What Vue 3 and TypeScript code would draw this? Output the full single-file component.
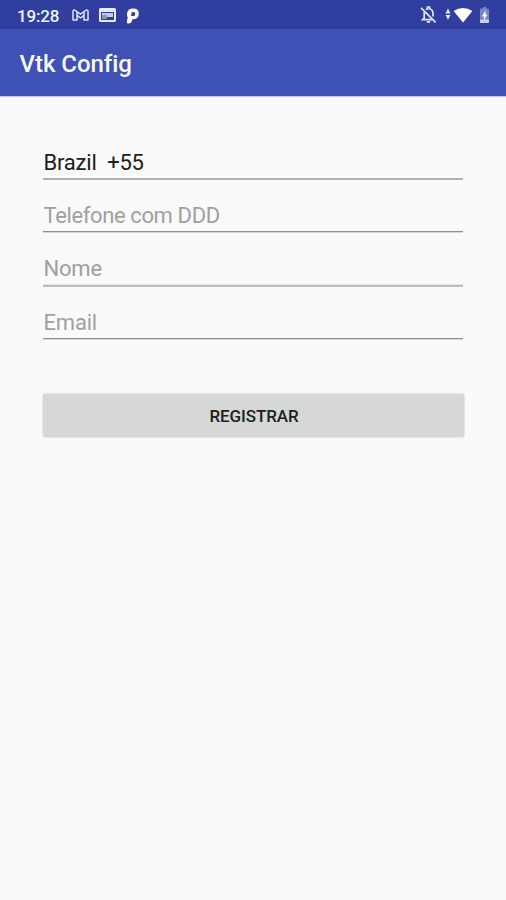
<script setup lang="ts">
import { ref } from 'vue'

interface Field {
  id: string
  placeholder: string
  value: string
}

const fields = ref<Field[]>([
  { id: 'country', placeholder: '', value: 'Brazil  +55' },
  { id: 'phone', placeholder: 'Telefone com DDD', value: '' },
  { id: 'name', placeholder: 'Nome', value: '' },
  { id: 'email', placeholder: 'Email', value: '' },
])
</script>

<template>
  <div class="screen">
    <header class="status">
      <span class="clock">19:28</span>
      <svg class="mail" width="17" height="12" viewBox="0 0 17 12" fill="none" stroke="#dfe4f8" stroke-width="1.5" stroke-linejoin="round">
        <path d="M1 11V2.2Q1 .9 2.6 1L8.5 5.2 14.4 1Q16 .9 16 2.2V11H12V6.4L8.5 9 5 6.4V11Z" />
        <path d="M5 2.6V6.4M12 2.6V6.4" />
      </svg>
      <svg class="panel" width="17" height="14" viewBox="0 0 17 14">
        <path fill="#e6eafa" fill-rule="evenodd" d="M1.5 0H15.5Q17 0 17 1.5V12.5Q17 14 15.5 14H1.5Q0 14 0 12.5V1.5Q0 0 1.5 0ZM2 4V12H15V4Z" />
        <path fill="#8995d3" d="M3 5H8V11H3Z" />
        <path fill="#c2caee" d="M3 5H14V9H8V7H3Z" />
      </svg>
      <svg class="letter" width="13" height="16" viewBox="0 0 13 16">
        <path fill="#fff" fill-rule="evenodd" d="M1 5.8Q1.6 0.5 7.2 0.5 12.8 0.5 12.8 5.8 12.8 11.5 6.2 11.5L5.6 13.8Q5.1 15.6 2.8 15.6 0.4 15.6 0.9 13.2L1.8 9.3Q0.6 8.2 1 5.8ZM5.8 4.1 5 8.1H7.1Q9.3 8.1 9.3 5.9 9.3 4.1 7.6 4.1Z" />
      </svg>
      <span class="spacer"></span>
      <svg class="bell" width="17" height="18" viewBox="0 0 17 18" fill="none" stroke="#dfe4f8" stroke-width="1.7">
        <path d="M6 3.7Q6.5 3 7.5 2.8V1H9.5V2.8Q13 3.8 13 7.4V10.5M4.2 6V12.2L2.7 13.7H12.5M6.8 15.8H10.2M1 1.8 15.6 16.4" />
      </svg>
      <svg class="wifi" width="28" height="16" viewBox="0 0 28 16" fill="#fff">
        <path d="M.5 6.4 3 1.6 5.5 6.4ZM.5 8H5.5L3 12.8Z" opacity=".9" />
        <path d="M8.6 4.1Q18-1.9 27.4 4.1L18 15.5Z" />
      </svg>
      <svg class="battery" width="9" height="16" viewBox="0 0 9 16">
        <path fill="#7784c8" d="M3 0H6V1.6H8Q9 1.6 9 2.6V15Q9 16 8 16H1Q0 16 0 15V2.6Q0 1.6 1 1.6H3Z" />
        <path fill="#c8cfee" d="M0 12.5H9V15Q9 16 8 16H1Q0 16 0 15Z" />
        <path fill="#fff" d="M5.5 3.2 1.8 9.4H4V13.6L7.4 7.6H5.5Z" />
      </svg>
    </header>
    <div class="toolbar"><h1>Vtk Config</h1></div>
    <main>
      <form @submit.prevent>
        <input
          v-for="field in fields"
          :key="field.id"
          v-model="field.value"
          class="field"
          :class="field.id"
          type="text"
          :placeholder="field.placeholder"
          :aria-label="field.placeholder || field.id"
        />
        <button type="submit">REGISTRAR</button>
      </form>
    </main>
  </div>
</template>

<style>
body {
  margin: 0;
  background: #fafafa;
}
</style>

<style scoped>
.screen {
  min-height: 900px;
  background: #fafafa;
  font-family: Roboto, sans-serif;
}
.status {
  display: flex;
  align-items: center;
  box-sizing: border-box;
  height: 29px;
  padding: 2px 17px 0 17px;
  background: #303f9f;
}
.clock {
  width: 55px;
  color: #f2f4fd;
  font-size: 17px;
  font-weight: 500;
  letter-spacing: -0.2px;
  line-height: 20px;
}
.mail {
  margin-top: -2px;
}
.panel {
  margin-left: 10px;
  margin-top: -1px;
}
.letter {
  margin-left: 10px;
}
.spacer {
  flex: 1;
}
.bell {
  margin-top: -1px;
}
.wifi {
  margin: -2px 7px 0 8px;
}
.battery {
  margin-top: -1px;
}
.toolbar {
  display: flex;
  align-items: center;
  height: 67px;
  padding: 0 19px;
  background: #3f51b5;
  box-shadow: 0 1px 1px #c5c9e2;
}
h1 {
  margin: 2px 0 0 0.5px;
  color: #f6f8ff;
  font-size: 24px;
  font-weight: 500;
  letter-spacing: -0.05px;
  line-height: 30px;
}
main {
  padding: 49px 42px 0 43px;
}
form {
  display: flex;
  flex-direction: column;
}
.field {
  box-sizing: border-box;
  width: 420px;
  height: 34.5px;
  margin: 0 0 19px;
  padding: 1.5px 0.5px 0.5px;
  border: 0;
  border-bottom: 2px solid #b1b1b1;
  border-radius: 0;
  outline: 0;
  background: transparent;
  color: #202020;
  font: 400 22px/30px Roboto, sans-serif;
  letter-spacing: -0.2px;
  white-space: pre;
}
.country {
  padding-top: 2.5px;
  padding-bottom: 0;
}
.phone {
  letter-spacing: -0.38px;
}
.phone,
.email {
  height: 33.5px;
  margin-bottom: 20px;
  border-bottom: 1px solid #8e8e8e;
  box-shadow: 0 1px #d8d8d8;
}
.name {
  border-bottom-color: #bdbdbd;
  box-shadow: 0 -1px #e3e3e3 inset;
}
.field::placeholder {
  color: #a0a0a0;
  opacity: 1;
}
button {
  width: 421px;
  height: 43px;
  margin-top: 35px;
  padding: 1px 0 0 1px;
  border: 0;
  border-radius: 2px;
  background: #d6d7d7;
  box-shadow: 0 0 2px #b8b8b8;
  color: #202020;
  font: 500 17px/42px Roboto, sans-serif;
  letter-spacing: -0.1px;
}
</style>
